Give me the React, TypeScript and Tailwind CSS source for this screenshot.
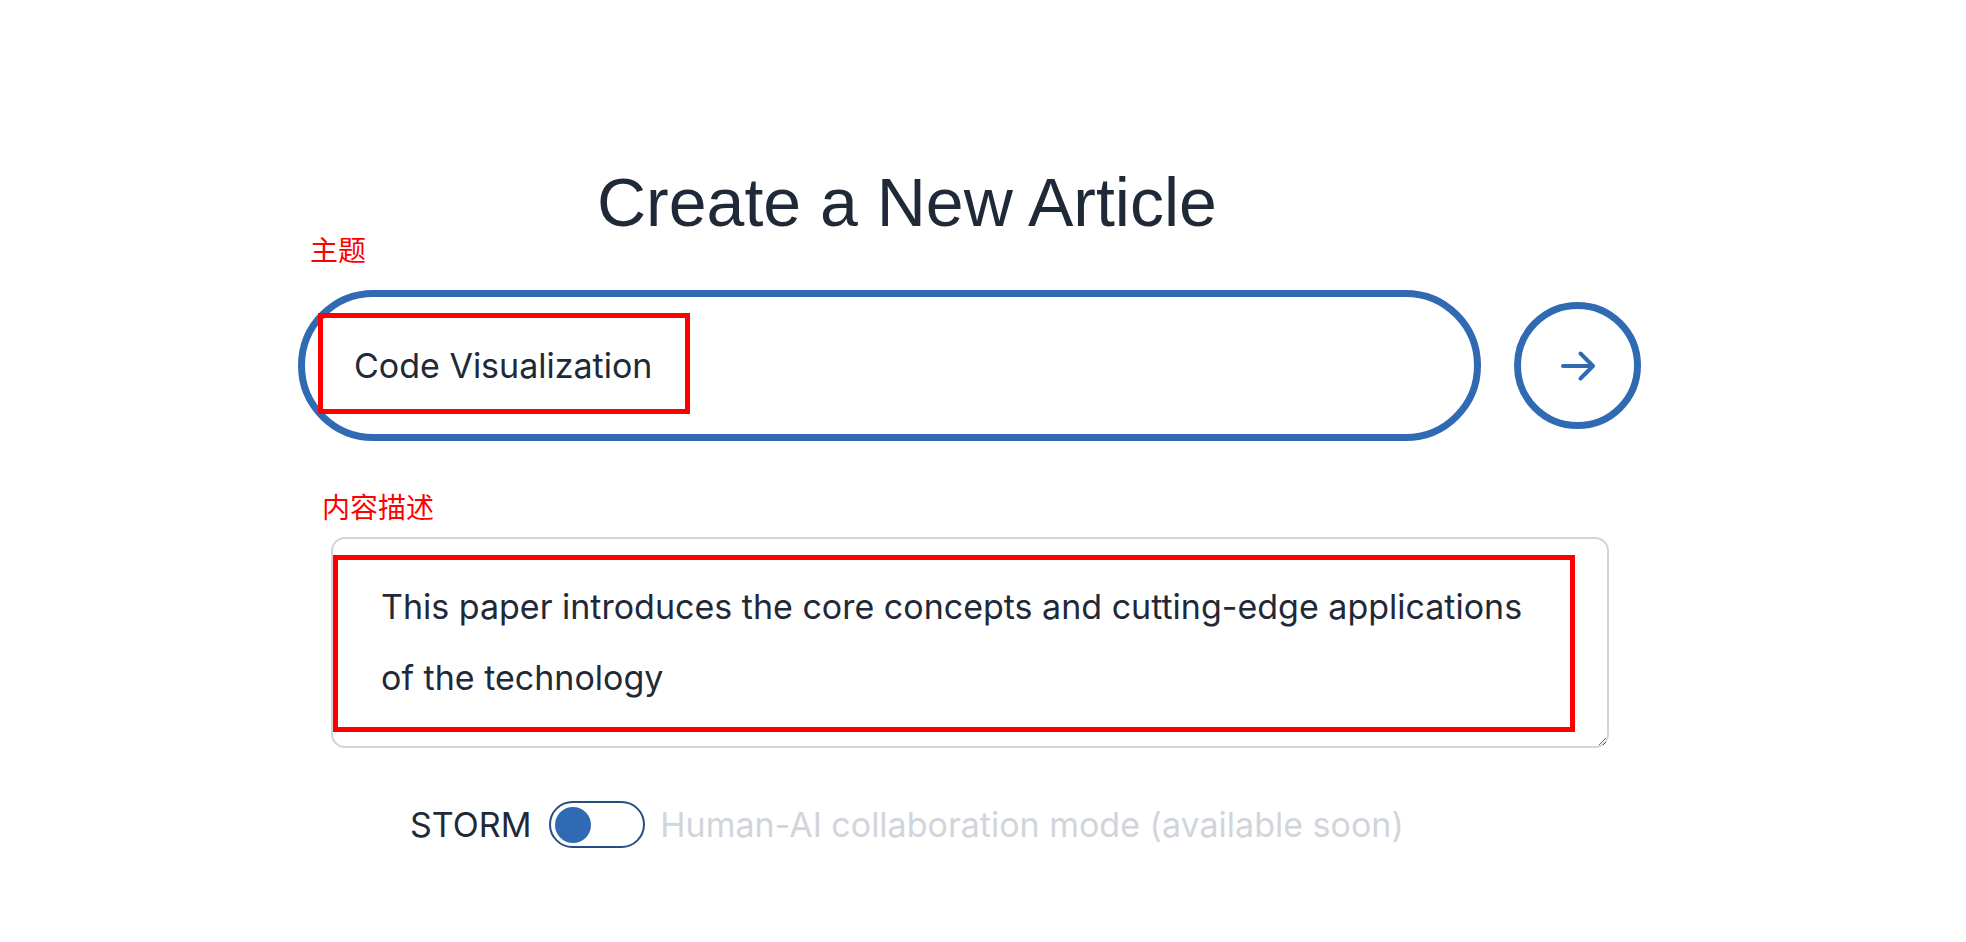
import { useState } from 'react';

const ArrowRight = () => (
    <svg viewBox="0 0 24 24" fill="none" stroke="currentColor" strokeWidth={2.4} strokeLinecap="round" strokeLinejoin="round" className="w-10 h-10">
        <path d="M13.5 4.5 21 12m0 0-7.5 7.5M21 12H3" />
    </svg>
);

const App = () => {
    const [topic, setTopic] = useState('Code Visualization');
    const [description, setDescription] = useState(
        'This paper introduces the core concepts and cutting-edge applications of the technology'
    );
    const [storm, setStorm] = useState(true);

    return (
        <div className="min-h-screen bg-white font-['Inter',sans-serif] text-[#1f2937]">
            <div className="pl-[298px] pr-[324px] pt-[168px] flex flex-col items-start">
                {/* Heading */}
                <h1 className="ml-[299px] text-[68px] leading-none font-normal font-['Liberation_Sans',Arial,sans-serif] text-[#1f2937]">
                    Create a New Article
                </h1>

                {/* Topic */}
                <div className="ml-[12px] -mt-[1px] text-[28px] leading-none text-[#ff0000] font-['Noto_Sans_CJK_SC',sans-serif]">
                    主题
                </div>
                <div className="mt-[27px] flex items-center gap-[33px]">
                    <div className="relative w-[1183px] h-[151px] rounded-full border-[7px] border-[#2f6ab2] flex items-center pl-[49px] pr-[50px]">
                        <input
                            value={topic}
                            onChange={e => setTopic(e.target.value)}
                            className="w-full bg-transparent outline-none text-[34px] text-[#1f2937]"
                        />
                        <div className="absolute left-[13px] top-[16px] w-[372px] h-[101px] border-[5px] border-[#ff0000] pointer-events-none" />
                    </div>
                    <button className="w-[127px] h-[127px] rounded-full border-[7px] border-[#2f6ab2] text-[#2f6ab2] flex items-center justify-center">
                        <ArrowRight />
                    </button>
                </div>

                {/* Description */}
                <div className="ml-[24px] mt-[51px] text-[28px] leading-none text-[#ff0000] font-['Noto_Sans_CJK_SC',sans-serif]">
                    内容描述
                </div>
                <div className="relative ml-[33px] mt-[17px]">
                    <textarea
                        value={description}
                        onChange={e => setDescription(e.target.value)}
                        className="block w-[1278px] h-[211px] rounded-[14px] border-2 border-[#d1d5db] pl-[48px] pr-[64px] pt-[32px] text-[34px] leading-[71px] text-[#1f2937] outline-none"
                    />
                    <div className="absolute left-[2px] top-[18px] w-[1242px] h-[177px] border-[5px] border-[#ff0000] pointer-events-none" />
                </div>

                {/* Mode switch */}
                <div className="ml-[112px] mt-[51px] flex items-center">
                    <span className="text-[34px] text-[#1f2937]">STORM</span>
                    <button
                        onClick={() => setStorm(!storm)}
                        className="ml-[18px] w-[96px] h-[47px] rounded-full border-2 border-[#284d83] flex items-center px-[4px]"
                    >
                        <span className="w-[36px] h-[36px] rounded-full bg-[#2f6ab2]" />
                    </button>
                    <span className="ml-[15px] text-[34px] text-[#d1d5db]">Human-AI collaboration mode (available soon)</span>
                </div>
            </div>
        </div>
    );
};

export default App;
